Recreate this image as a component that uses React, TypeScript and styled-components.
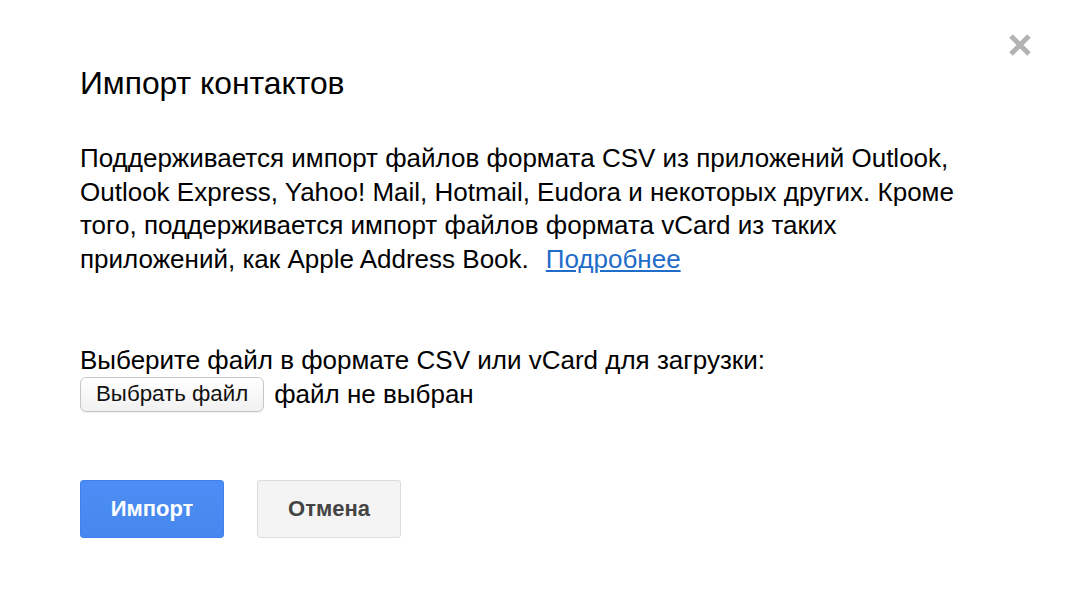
import React from 'react';
import styled, { createGlobalStyle } from 'styled-components';

const GlobalStyle = createGlobalStyle`
  html, body {
    margin: 0;
    padding: 0;
    background: #ffffff;
  }
  body {
    font-family: "Liberation Sans", Arial, sans-serif;
    color: #000;
  }
`;

const Dialog = styled.div`
  position: relative;
  width: 1065px;
  height: 596px;
  box-sizing: border-box;
  padding: 65px 80px 0 80px;
  background: #fff;
`;

const CloseButton = styled.button`
  position: absolute;
  top: 28px;
  right: 28px;
  width: 34px;
  height: 34px;
  padding: 0;
  border: none;
  background: transparent;
  cursor: pointer;
  display: flex;
  align-items: center;
  justify-content: center;
`;

const Title = styled.h2`
  margin: 0;
  font-size: 31.8px;
  font-weight: normal;
  line-height: 36px;
`;

const Description = styled.p`
  margin: 41px 0 0 0;
  font-size: 26px;
  line-height: 33.7px;
  width: 890px;
`;

const MoreLink = styled.a`
  color: #1f6cc9;
  text-decoration: underline;
  margin-left: 17px;
`;

const UploadSection = styled.div`
  margin-top: 66px;
  font-size: 26px;
  line-height: 34px;
`;

const FileRow = styled.div`
  display: flex;
  align-items: center;
  gap: 10px;
`;

const FileButton = styled.button`
  height: 35px;
  padding: 0 15px;
  border: 1px solid #c6c6c6;
  border-radius: 6px;
  background: linear-gradient(#ffffff, #f1f1f1);
  font-family: "Liberation Sans", Arial, sans-serif;
  font-size: 22.3px;
  color: #111;
  box-shadow: 0 1px 1px rgba(0, 0, 0, 0.06);
`;

const Actions = styled.div`
  display: flex;
  gap: 33px;
  margin-top: 68px;
`;

const ActionButton = styled.button<{ $primary?: boolean }>`
  width: 144px;
  height: 58px;
  border-radius: 3px;
  font-family: "Liberation Sans", Arial, sans-serif;
  font-size: 22px;
  font-weight: bold;
  cursor: pointer;
  border: 1px solid ${p => (p.$primary ? '#3f82ef' : '#dcdcdc')};
  background: ${p => (p.$primary ? 'linear-gradient(#4c8ef5, #4787ed)' : '#f4f4f4')};
  color: ${p => (p.$primary ? '#ffffff' : '#444444')};
`;

export default function App() {
  return (
    <>
      <GlobalStyle />
      <Dialog>
        <CloseButton aria-label="Закрыть">
          <svg width="24" height="24" viewBox="0 0 24 24">
            <path d="M3 3 L21 21 M21 3 L3 21" stroke="#b3b3b3" strokeWidth="5" strokeLinecap="butt" />
          </svg>
        </CloseButton>
        <Title>Импорт контактов</Title>
        <Description>
          Поддерживается импорт файлов формата CSV из приложений Outlook, Outlook Express, Yahoo! Mail,
          Hotmail, Eudora и некоторых других. Кроме того, поддерживается импорт файлов формата vCard из
          таких приложений, как Apple Address Book.
          <MoreLink href="#">Подробнее</MoreLink>
        </Description>
        <UploadSection>
          <div>Выберите файл в формате CSV или vCard для загрузки:</div>
          <FileRow>
            <FileButton>Выбрать файл</FileButton>
            <span>файл не выбран</span>
          </FileRow>
        </UploadSection>
        <Actions>
          <ActionButton $primary>Импорт</ActionButton>
          <ActionButton>Отмена</ActionButton>
        </Actions>
      </Dialog>
    </>
  );
}
